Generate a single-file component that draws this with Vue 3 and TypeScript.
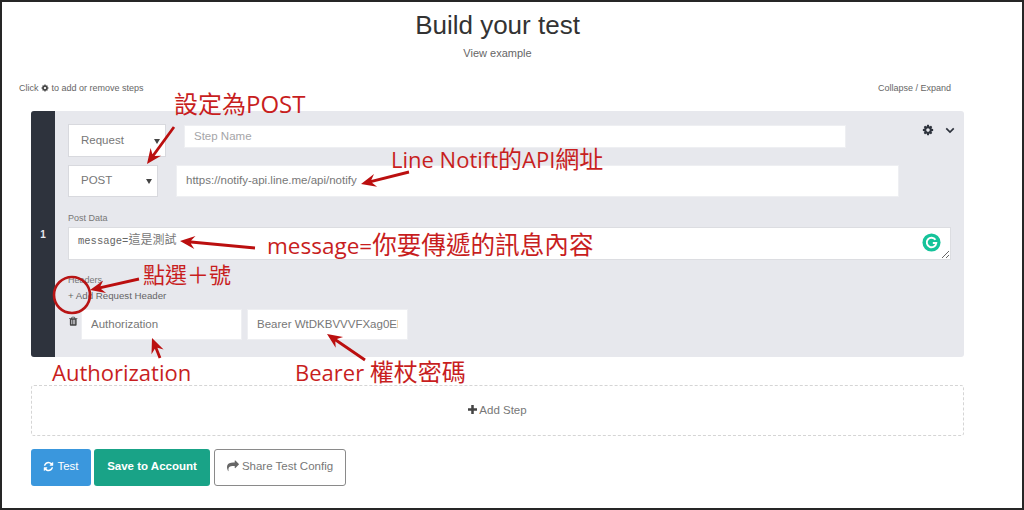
<script setup lang="ts">
// red arrows drawn on top of the form, [fromX, fromY, tipX, tipY]
const arrowLines: number[][] = [
  [174, 127, 147, 164],
  [409, 172, 361, 184],
  [255, 248, 180, 241],
  [139, 279, 90, 290],
  [160, 358, 152, 338],
  [365, 360, 327, 334],
]

function arrowPoints(a: number[]): string {
  const [x1, y1, x2, y2] = a
  const len = Math.hypot(x2 - x1, y2 - y1)
  const ux = (x2 - x1) / len
  const uy = (y2 - y1) / len
  const nx = -uy
  const ny = ux
  const at = (back: number, side: number) =>
    `${(x2 - ux * back + nx * side).toFixed(1)},${(y2 - uy * back + ny * side).toFixed(1)}`
  const start = (side: number) => `${(x1 + nx * side).toFixed(1)},${(y1 + ny * side).toFixed(1)}`
  return [start(-1.4), at(11, -1.4), at(15, -6.5), at(0, 0), at(15, 6.5), at(11, 1.4), start(1.4)].join(' ')
}

const cog = 'M1152 896q0-106-75-181t-181-75-181 75-75 181 75 181 181 75 181-75 75-181zm512-109v222q0 12-8 23t-20 13l-185 28q-19 54-39 91 35 50 107 138 10 12 10 25t-9 23q-27 37-99 108t-94 71q-12 0-26-9l-138-108q-44 23-91 38-16 136-29 186-7 28-36 28h-222q-14 0-24.5-8.5t-11.5-21.5l-28-184q-49-16-90-37l-141 107q-10 9-25 9-14 0-25-11-126-114-165-168-7-10-7-23 0-12 8-23 15-21 51-66.5t54-70.5q-27-50-41-99l-183-27q-13-2-21-12.5t-8-23.5v-222q0-12 8-23t19-13l186-28q14-46 39-92-40-57-107-138-10-12-10-24 0-10 9-23 26-36 98.5-107.5t94.5-71.5q13 0 26 10l138 107q44-23 91-38 16-136 29-186 7-28 36-28h222q14 0 24.5 8.5t11.5 21.5l28 184q49 16 90 37l142-107q9-9 24-9 13 0 25 10 129 119 165 170 7 8 7 22 0 12-8 23-15 21-51 66.5t-54 70.5q26 50 41 98l183 28q13 2 21 12.5t8 23.5z'
const refresh = 'M1639 1056q0 5-1 7-64 268-268 434.5t-478 166.5q-146 0-282.5-55t-243.5-157l-129 129q-19 19-45 19t-45-19-19-45v-448q0-26 19-45t45-19h448q26 0 45 19t19 45-19 45l-137 137q71 66 161 102t187 36q134 0 250-65t186-179q11-17 53-117 8-23 30-23h192q13 0 22.5 9.5t9.5 22.5zm25-800v448q0 26-19 45t-45 19h-448q-26 0-45-19t-19-45 19-45l138-138q-148-137-349-137-134 0-250 65t-186 179q-11 17-53 117-8 23-30 23h-199q-13 0-22.5-9.5t-9.5-22.5v-7q65-268 270-434.5t480-166.5q146 0 284 55.5t245 156.5l130-129q19-19 45-19t45 19 19 45z'
const share = 'M1792 640q0 26-19 45l-512 512q-19 19-45 19t-45-19-19-45v-256h-224q-98 0-175.5 6t-154 21.5-133 42.5-105.5 69.5-80 101-48.5 138.5-17.5 181q0 55 5 123 0 6 2.5 23.5t2.5 26.5q0 15-8.5 25t-23.5 10q-16 0-28-17-7-9-13-22t-13.5-30-10.5-24q-127-285-127-451 0-199 53-333 162-403 875-403h224v-256q0-26 19-45t45-19 45 19l512 512q19 19 19 45z'
const trash = 'M704 1376v-704q0-14-9-23t-23-9h-64q-14 0-23 9t-9 23v704q0 14 9 23t23 9h64q14 0 23-9t9-23zm256 0v-704q0-14-9-23t-23-9h-64q-14 0-23 9t-9 23v704q0 14 9 23t23 9h64q14 0 23-9t9-23zm256 0v-704q0-14-9-23t-23-9h-64q-14 0-23 9t-9 23v704q0 14 9 23t23 9h64q14 0 23-9t9-23zm-544-992h448l-48-117q-7-9-17-11h-317q-10 2-17 11zm928 32v64q0 14-9 23t-23 9h-96v948q0 83-47 143.5t-113 60.5h-832q-66 0-113-58.5t-47-141.5v-952h-96q-14 0-23-9t-9-23v-64q0-14 9-23t23-9h309l70-167q15-37 54-63t79-26h320q40 0 79 26t54 63l70 167h309q14 0 23 9t9 23z'
</script>

<template>
  <div class="page">
    <h1 class="title">Build your test</h1>
    <div class="example">View example</div>

    <div class="hints">
      <span class="hint-left">
        Click
        <svg class="hint-cog" viewBox="0 0 1792 1792"><path :d="cog" /></svg>
        to add or remove steps
      </span>
      <span>Collapse / Expand</span>
    </div>

    <div class="card">
      <div class="stripe">1</div>
      <div class="card-body">
        <div class="tools">
          <svg class="tool-cog" viewBox="0 0 1792 1792"><path :d="cog" /></svg>
          <svg class="tool-chev" viewBox="0 0 12 8"><path d="M1.5 1.5 6 6l4.5-4.5" /></svg>
        </div>

        <div class="row">
          <div class="select select-type">Request</div>
          <input class="field step-name" placeholder="Step Name">
        </div>
        <div class="row row-url">
          <div class="select select-method">POST</div>
          <input class="field url" value="https://notify-api.line.me/api/notify">
        </div>

        <div class="label post-label">Post Data</div>
        <div class="post-wrap">
          <div class="post-data">message=<span class="post-cjk">這是測試</span></div>
          <svg class="grammarly" viewBox="0 0 20 20">
            <circle cx="10" cy="10" r="9.5" fill="#15c39a" />
            <path d="M14.2 7.2A5 5 0 1 0 15 10.6h-3.6" fill="none" stroke="#fff" stroke-width="2" />
          </svg>
        </div>

        <div class="label headers-label">Headers</div>
        <div class="add-header">+ Add Request Header</div>
        <div class="header-row">
          <svg class="trash" viewBox="0 0 1792 1792"><path :d="trash" /></svg>
          <input class="field header-input" value="Authorization">
          <input class="field header-input" value="Bearer WtDKBVVVFXag0El">
        </div>
      </div>
    </div>

    <div class="add-step">
      <svg class="plus" viewBox="0 0 10 10"><path d="M3.6 0h2.8v3.6H10v2.8H6.4V10H3.6V6.4H0V3.6h3.6z" /></svg>
      Add Step
    </div>

    <div class="actions">
      <button class="btn btn-test">
        <svg viewBox="0 0 1792 1792"><path :d="refresh" /></svg>
        Test
      </button>
      <button class="btn btn-save">Save to Account</button>
      <button class="btn btn-share">
        <svg viewBox="0 0 1792 1792"><path :d="share" /></svg>
        Share Test Config
      </button>
    </div>

    <!-- annotations on top of the screenshot -->
    <svg class="marks" viewBox="0 0 1024 510">
      <circle cx="72" cy="295" r="18" fill="none" stroke="#b81414" stroke-width="2.6" />
      <polygon v-for="(a, i) in arrowLines" :key="i" :points="arrowPoints(a)" fill="#bb0f0f" />
    </svg>
    <span class="note n-post">設定為POST</span>
    <span class="note n-api">Line Notift<span class="cjk">的</span>API<span class="cjk">網址</span></span>
    <span class="note n-msg">message=<span class="cjk">你要傳遞的訊息內容</span></span>
    <span class="note n-plus"><span class="cjk">點選＋號</span></span>
    <span class="note n-auth">Authorization</span>
    <span class="note n-bearer">Bearer <span class="cjk">權杖密碼</span></span>
  </div>
</template>

<style>
html, body { margin: 0; background: #fff; }
</style>

<style scoped>
.page {
  position: relative; width: 1024px; height: 510px; overflow: hidden; box-sizing: border-box;
  padding: 0 60px 0 31px; background: #fff; box-shadow: inset 0 0 0 2px #262626;
  font-family: 'Liberation Sans', Arial, sans-serif; color: #777;
}
.title { margin: 10px 0 0; font-size: 26px; font-weight: 400; line-height: 30px; text-align: center; color: #333; }
.example { margin-top: 6px; font-size: 11px; line-height: 14px; text-align: center; color: #666; }

.hints {
  display: flex; justify-content: space-between; margin: 22px 13px 0 -12px;
  font-size: 9px; line-height: 12px; color: #666;
}
.hint-left { display: flex; align-items: center; gap: 2.5px; }
.hint-cog { width: 8px; height: 8px; fill: #444; }

.card { display: flex; margin-top: 17px; height: 246px; background: #e7e8ed; border-radius: 3px; }
.stripe {
  flex: 0 0 24px; display: flex; align-items: center; justify-content: center;
  background: #2e333d; color: #e8e8ee; font-size: 10px; font-weight: 700;
  border-radius: 3px 0 0 3px;
}
.card-body { position: relative; flex: 1; padding: 13px 13px 0; }
.tools { position: absolute; top: 13px; right: 9px; display: flex; align-items: center; gap: 11px; }
.tool-cog { width: 12px; height: 12px; fill: #2e333d; }
.tool-chev { width: 10px; height: 7px; fill: none; stroke: #2e333d; stroke-width: 2; }

.row { display: flex; align-items: flex-start; gap: 18px; }
.row-url { margin-top: 8px; }
.select, .field {
  box-sizing: border-box; background: #fff; color: #777;
  font-family: 'Liberation Sans', Arial, sans-serif; font-size: 11.5px;
}
.select {
  position: relative; display: flex; align-items: center; padding: 0 0 2px 12px;
  border: 1px solid #d8d9de;
}
.select::after {
  content: ''; position: absolute; right: 5px; top: 50%; margin-top: -2px;
  border: 3px solid transparent; border-top: 5px solid #444; border-bottom: 0;
}
.select-type { width: 98px; height: 33px; }
.select-method { width: 90px; height: 32px; }
.field { border: 1px solid #eeeff2; outline: none; padding: 0 9px 2px; }
.field::placeholder { color: #a5a5a8; opacity: 1; }
.step-name { width: 662px; height: 23px; margin-top: 1px; }
.url { width: 723px; height: 32px; }

.label { font-size: 9px; line-height: 12px; color: #777; }
.post-label { margin-top: 15px; }
.post-wrap { position: relative; margin-top: 3px; height: 33px; }
.post-data {
  box-sizing: border-box; width: 883px; height: 33px; padding: 4px 9px; overflow: auto; resize: vertical;
  border: 1px solid #dcdde1; background: #fff; color: #666;
  font-family: 'Liberation Mono', monospace; font-size: 10.5px; line-height: 14px;
}
.post-cjk { font-family: 'Noto Sans CJK TC', sans-serif; font-size: 12px; color: #777; }
.grammarly { position: absolute; right: 10px; top: 6px; width: 19px; height: 19px; }
.headers-label { margin-top: 14px; }
.add-header { margin-top: 2px; font-size: 9.7px; line-height: 16px; color: #666; }
.header-row { display: flex; align-items: flex-start; gap: 5px; margin-top: 5px; }
.trash { flex: 0 0 10.5px; width: 10.5px; height: 10.5px; margin: 7px -2.5px 0 0; fill: #444; }
.header-input { width: 161px; height: 31px; }

.add-step {
  display: flex; align-items: center; justify-content: center; gap: 2px; box-sizing: border-box;
  margin-top: 28px; height: 51px; padding-bottom: 2px; border: 1px dashed #d5d5d5; border-radius: 3px;
  font-size: 11.5px; color: #777;
}
.plus { width: 9px; height: 9px; fill: #444; }

.actions { display: flex; margin-top: 13px; }
.btn {
  display: flex; align-items: center; justify-content: center; gap: 3px; box-sizing: border-box;
  height: 37px; padding: 0 0 3px; border: 0; border-radius: 3px;
  font-family: 'Liberation Sans', Arial, sans-serif; font-size: 11.5px; color: #fff;
}
.btn svg { width: 11px; height: 11px; fill: currentColor; }
.btn-test { width: 60px; background: #3a97dd; }
.btn-save { width: 116px; margin-left: 3px; background: #19a387; font-weight: 700; }
.btn-share { width: 132px; margin-left: 4px; background: #fff; border: 1px solid #8a8a8a; color: #777; }
.btn-share svg { width: 12px; height: 12px; fill: #666; }

.marks { position: absolute; left: 0; top: 0; width: 1024px; height: 510px; pointer-events: none; }
.note {
  position: absolute; white-space: nowrap; color: #c81e1e; font-size: 22px; line-height: 28px;
  font-family: 'Open Sans', 'Noto Sans CJK TC', sans-serif;
}
.cjk { font-size: 24px; line-height: 28px; }
.n-post { left: 174px; top: 90px; font-size: 24px; }
.n-api { left: 391px; top: 145px; }
.n-msg { left: 267px; top: 231px; font-size: 22.5px; }
.n-msg .cjk { font-size: 24.6px; }
.n-plus { left: 143px; top: 260px; }
.n-plus .cjk { font-size: 22px; }
.n-auth { left: 52px; top: 358px; }
.n-bearer { left: 295px; top: 358px; }
.n-bearer .cjk { font-size: 24px; }
</style>
